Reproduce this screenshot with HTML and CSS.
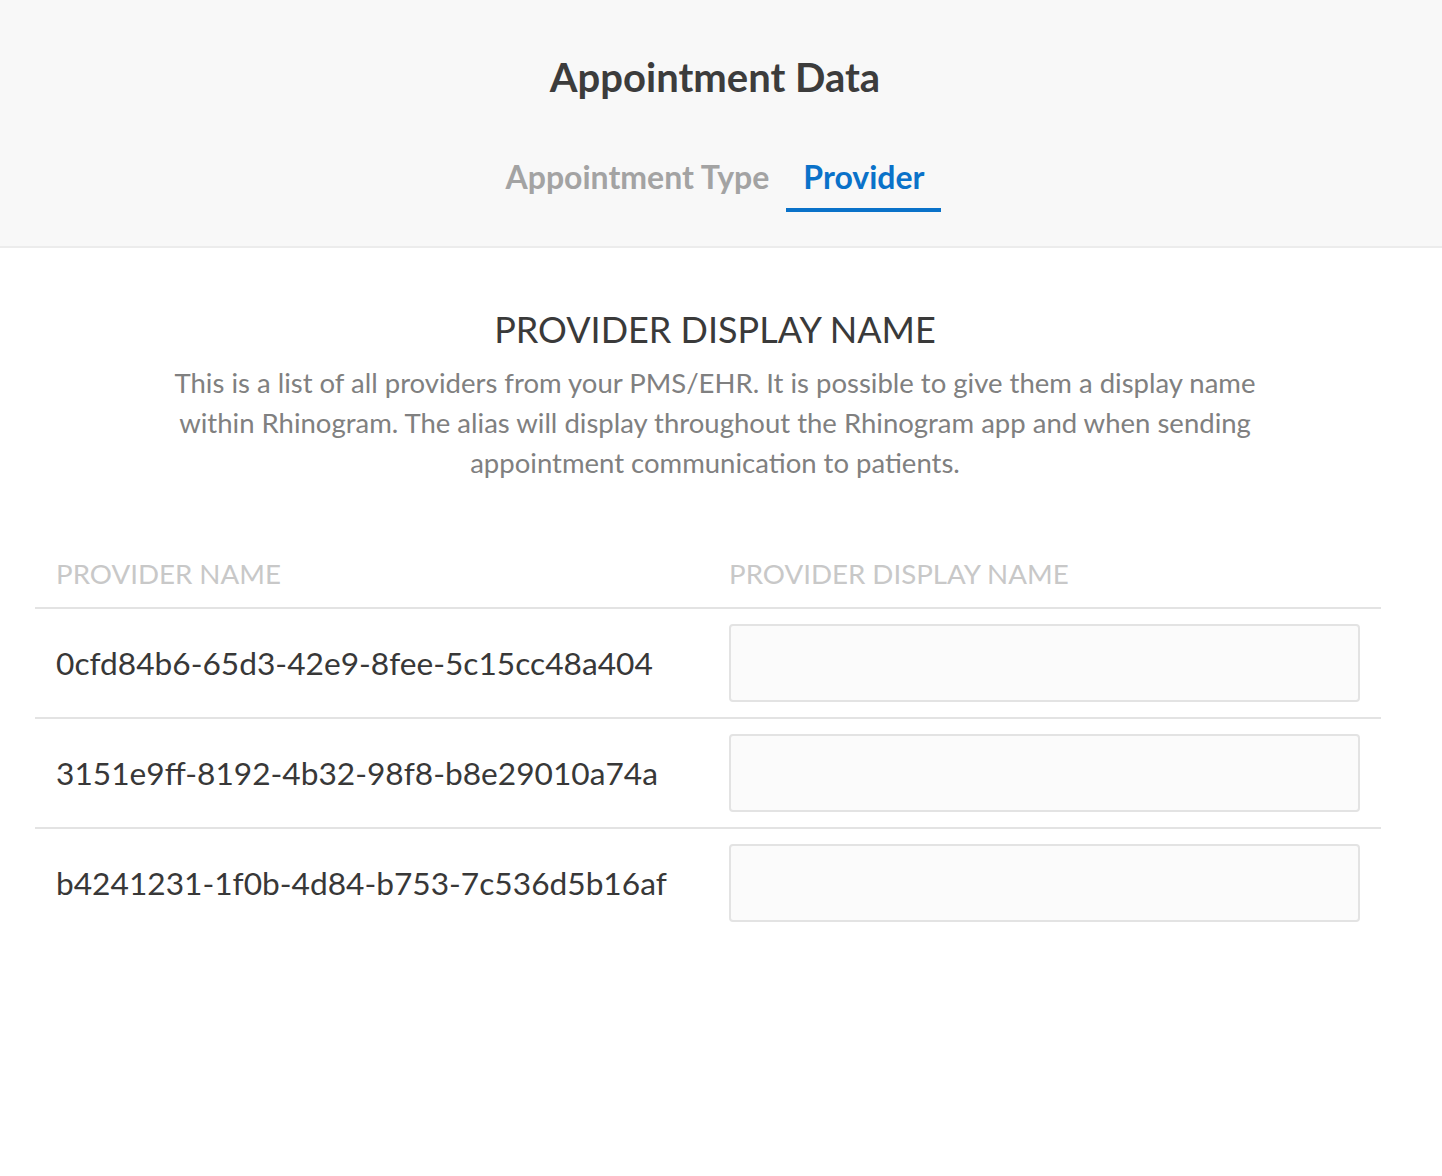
FILE: index.html
```html
<!DOCTYPE html>
<html>
<head>
<meta charset="utf-8">
<link rel="stylesheet" href="styles.css">
</head>
<body>
<header class="top">
  <h1 class="title">Appointment Data</h1>
  <nav class="tabs">
    <div class="tab">Appointment Type</div>
    <div class="tab active">Provider</div>
  </nav>
</header>
<main class="content">
  <section class="intro">
    <h2 class="section-title">PROVIDER DISPLAY NAME</h2>
    <p class="desc">This is a list of all providers from your PMS/EHR. It is possible to give them a display name within Rhinogram. The alias will display throughout the Rhinogram app and when sending appointment communication to patients.</p>
  </section>
  <div class="table">
    <div class="row head">
      <div class="cell">PROVIDER NAME</div>
      <div class="cell">PROVIDER DISPLAY NAME</div>
    </div>
    <div class="row">
      <div class="cell name">0cfd84b6-65d3-42e9-8fee-5c15cc48a404</div>
      <div class="cell"><input class="input" type="text"></div>
    </div>
    <div class="row">
      <div class="cell name">3151e9ff-8192-4b32-98f8-b8e29010a74a</div>
      <div class="cell"><input class="input" type="text"></div>
    </div>
    <div class="row last">
      <div class="cell name">b4241231-1f0b-4d84-b753-7c536d5b16af</div>
      <div class="cell"><input class="input" type="text"></div>
    </div>
  </div>
</main>
</body>
</html>
```
FILE: styles.css
```css
* { box-sizing: border-box; }
html, body { margin: 0; padding: 0; background: #fff; }
body { font-family: Lato, "Open Sans", sans-serif; color: #333; }

.top {
  background: #f8f8f8;
  border-bottom: 2px solid #ececec;
  height: 248px;
  width: 100%;
}
.title, .tabs { width: 1430px; }

.title {
  margin: 0;
  padding-top: 50px;
  font-size: 40px;
  font-weight: 700;
  line-height: 54px;
  color: #3c3c3c;
  text-align: center;
}
.tabs {
  display: flex;
  justify-content: center;
  margin-top: 53px;
}
.tab {
  font-size: 32px;
  font-weight: 700;
  color: #a3a3a3;
  padding: 0 17px;
  line-height: 40px;
  height: 55px;
  border-bottom: 4px solid transparent;
}
.tab.active {
  color: #0a72c9;
  border-bottom-color: #0a72c9;
}

.content { width: 1430px; }
.intro {
  display: flex;
  flex-direction: column;
  align-items: center;
  padding-top: 58px;
}
.section-title {
  margin: 0;
  font-size: 36px;
  font-weight: 400;
  line-height: 46px;
  color: #3a3a3a;
}
.desc {
  margin: 11px 0 0;
  width: 1090px;
  font-size: 27.5px;
  line-height: 40px;
  color: #808080;
  text-align: center;
}

.table {
  margin: 74px 0 0 35px;
  width: 1346px;
}
.row {
  display: grid;
  grid-template-columns: 1fr 1fr;
  border-bottom: 2px solid #e3e3e3;
  align-items: center;
}
.row.last { border-bottom: none; }
.cell { padding: 0 21px; }
.head .cell {
  font-size: 27.7px;
  color: #c8c8c8;
  line-height: 34px;
  padding-bottom: 16px;
}
.row:not(.head) { padding: 15px 0; }
.name {
  font-size: 31.7px;
  color: #383838;
}
.input {
  display: block;
  width: 100%;
  height: 78px;
  background: #fbfbfb;
  border: 2px solid #e3e3e3;
  border-radius: 4px;
  font: inherit;
  outline: none;
}
```
